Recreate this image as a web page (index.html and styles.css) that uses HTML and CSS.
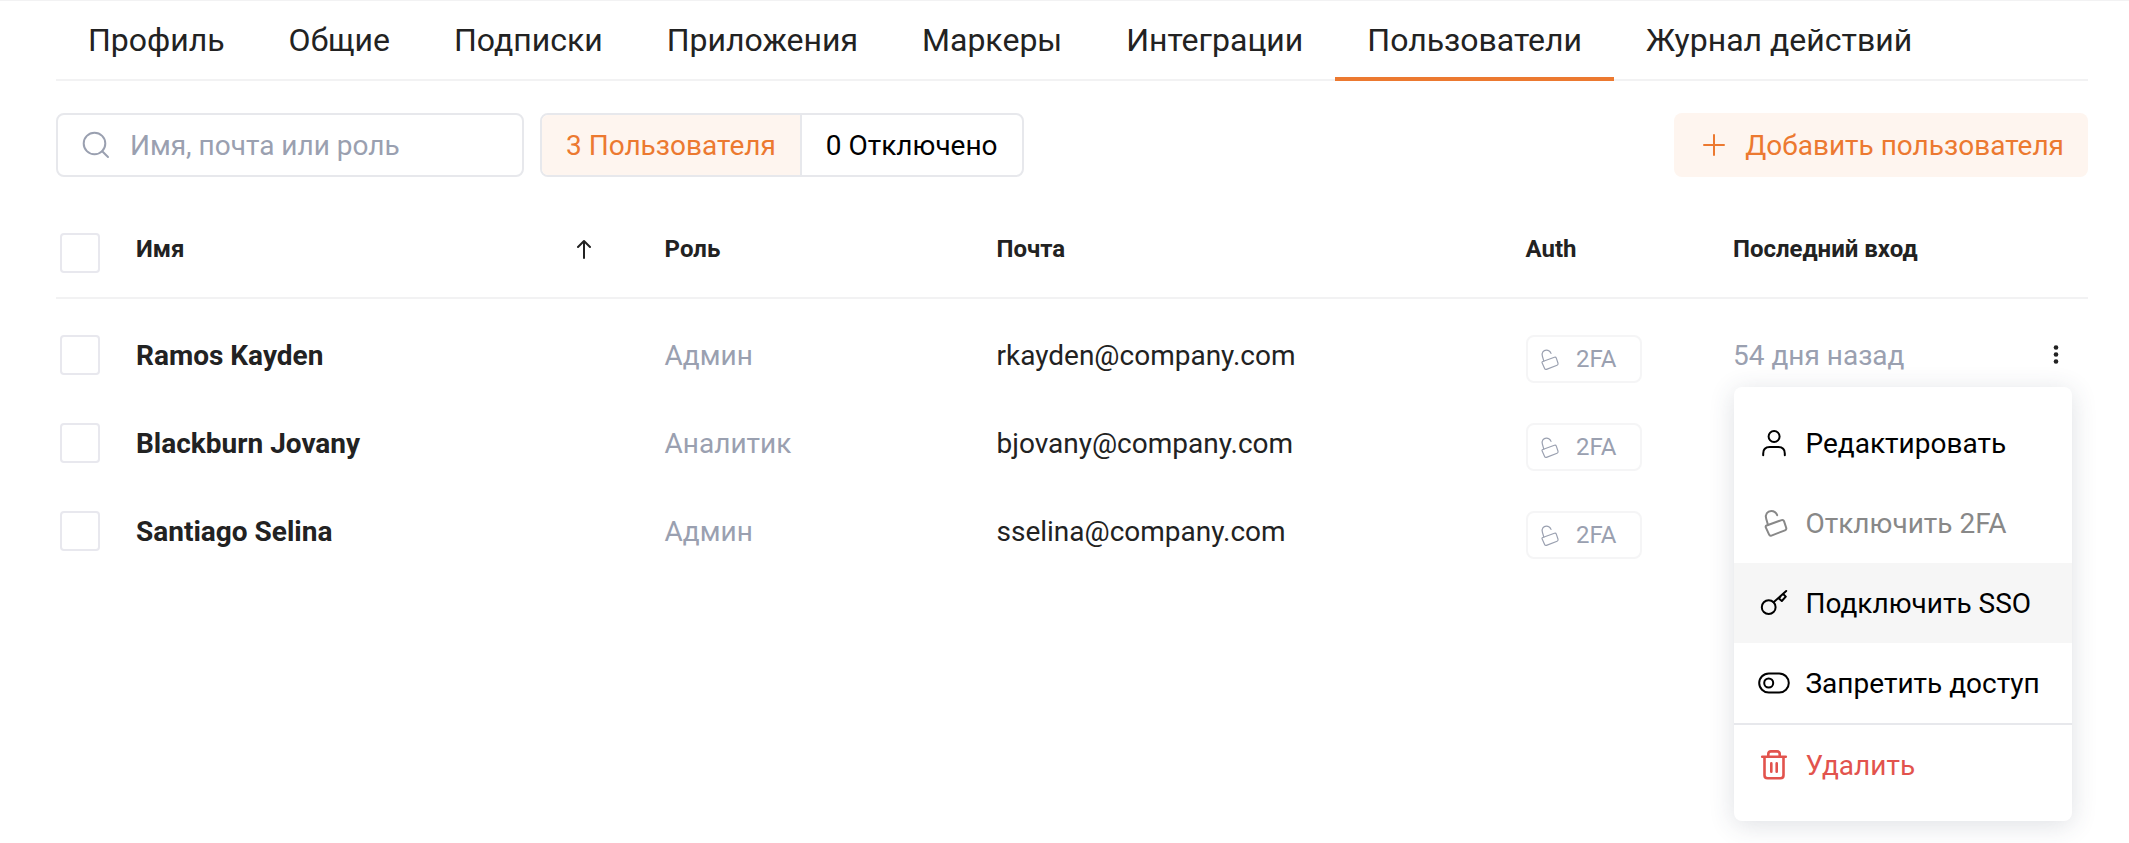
FILE: index.html
```html
<!DOCTYPE html>
<html lang="ru">
<head>
<meta charset="utf-8">
<title>Пользователи</title>
<link rel="stylesheet" href="styles.css">
</head>
<body>
<svg class="sprite" width="0" height="0">
  <symbol id="lock" viewBox="0 0 32 32">
    <path d="M10 18 L8.2 11.8 C6.8 7.5 9.5 4 13.2 4 C16.3 4 18.3 5.8 19.2 8.2"/>
    <path d="M8.6 18.5 L23.6 13.1 Q25.4 12.5 26 14.2 L28.2 20.8 Q28.7 22.6 27 23.3 L13.4 28.6 Q11.7 29.1 11 27.4 L7.9 20.6 Q7.2 19 8.6 18.5 Z"/>
  </symbol>
</svg>
<div class="page">
  <nav class="tabs">
    <a class="tab">Профиль</a>
    <a class="tab">Общие</a>
    <a class="tab">Подписки</a>
    <a class="tab">Приложения</a>
    <a class="tab">Маркеры</a>
    <a class="tab">Интеграции</a>
    <a class="tab tab-active">Пользователи</a>
    <a class="tab">Журнал действий</a>
  </nav>

  <div class="toolbar">
    <div class="search">
      <svg class="search-icon" width="28" height="28" viewBox="0 0 28 28"><circle cx="12.5" cy="12.5" r="10.8"/><path d="M20.2 20.2 L26 26"/></svg>
      <span class="label">Имя, почта или роль</span>
    </div>
    <div class="segments">
      <span class="segment segment-active">3 Пользователя</span>
      <span class="segment">0 Отключено</span>
    </div>
    <button class="add"><svg width="22" height="22" viewBox="0 0 22 22"><path d="M11 1 V21 M1 11 H21"/></svg><span class="label">Добавить пользователя</span></button>
  </div>

  <div class="row head">
    <span class="check"></span>
    <span class="cell-name">Имя<svg class="arrow" width="16" height="20" viewBox="0 0 16 20"><path d="M8 19 V2 M2 8 L8 2 L14 8"/></svg></span>
    <span>Роль</span>
    <span>Почта</span>
    <span>Auth</span>
    <span>Последний вход</span>
  </div>

  <div class="rows">
    <div class="row">
      <span class="check"></span>
      <span class="label name">Ramos Kayden</span>
      <span class="label muted">Админ</span>
      <span class="label">rkayden@company.com</span>
      <span class="badge"><svg width="25" height="25"><use href="#lock" width="25" height="25"/></svg>2FA</span>
      <span class="last">
        <span class="label muted">54 дня назад</span>
        <svg class="dots" width="8" height="24" viewBox="0 0 8 24"><circle cx="4" cy="4.5" r="2.3"/><circle cx="4" cy="11.5" r="2.3"/><circle cx="4" cy="18.5" r="2.3"/></svg>
        <span class="menu">
          <span class="item"><svg class="icon" viewBox="0 0 32 32"><circle cx="16.1" cy="9.5" r="5.5"/><path d="M5.2 28.2 V26.5 Q5.2 20 11.7 20 H20.3 Q26.8 20 26.8 26.5 V28.2"/></svg><span class="label">Редактировать</span></span>
          <span class="item item-off"><svg class="icon"><use href="#lock" width="32" height="32"/></svg><span class="label">Отключить 2FA</span></span>
          <span class="item item-hover"><svg class="icon" viewBox="0 0 32 32"><circle cx="10.7" cy="20.2" r="6.9"/><path d="M15.6 15.2 L28.2 4 M22.5 9.5 L20.9 11.6 L23.8 14 L27.8 9.6 L25.4 7.2"/></svg><span class="label">Подключить SSO</span></span>
          <span class="item"><svg class="icon" viewBox="0 0 32 32"><rect x="1.2" y="6.4" width="29.6" height="19.2" rx="9.6"/><circle cx="10.7" cy="16" r="4.5"/></svg><span class="label">Запретить доступ</span></span>
          <span class="item item-delete"><svg class="icon" viewBox="0 0 32 32"><path d="M4.2 7.7 H27.8 M10.3 7.2 V5 Q10.3 2.4 13 2.4 H19 Q21.7 2.4 21.7 5 V7.2 M6.5 8 V26.2 Q6.5 29.2 9.5 29.2 H22.5 Q25.5 29.2 25.5 26.2 V8 M13.3 14.4 V22.8 M18.7 14.4 V22.8"/></svg><span class="label">Удалить</span></span>
        </span>
      </span>
    </div>
    <div class="row">
      <span class="check"></span>
      <span class="label name">Blackburn Jovany</span>
      <span class="label muted">Аналитик</span>
      <span class="label">bjovany@company.com</span>
      <span class="badge"><svg width="25" height="25"><use href="#lock" width="25" height="25"/></svg>2FA</span>
    </div>
    <div class="row">
      <span class="check"></span>
      <span class="label name">Santiago Selina</span>
      <span class="label muted">Админ</span>
      <span class="label">sselina@company.com</span>
      <span class="badge"><svg width="25" height="25"><use href="#lock" width="25" height="25"/></svg>2FA</span>
    </div>
  </div>
</div>
</body>
</html>
```
FILE: styles.css
```css
* { box-sizing: border-box; }
body {
  margin: 0;
  height: 843px;
  overflow: hidden;
  background: #fff;
  color: #222;
  font: 28px/40px Roboto, sans-serif;
  border-top: 1px solid #f2f2f3;
}
svg { fill: none; stroke: currentColor; stroke-width: 2; stroke-linecap: round; stroke-linejoin: round; flex: none; }
.sprite { display: block; }
.page { padding: 0 41px 0 56px; }
.label { padding-top: 2px; }

.tabs { display: flex; height: 80px; border-bottom: 2px solid #f2f2f3; font-size: 32px; }
.tab { height: 80px; padding: 19px 32px 0; white-space: nowrap; }
.tab-active { border-bottom: 4px solid #ec7930; }

.toolbar { display: flex; height: 64px; margin-top: 32px; }
.search {
  display: flex; align-items: center; width: 468px; padding-left: 24px; gap: 20px;
  border: 2px solid #e7e8ec; border-radius: 8px; color: #9aa0b0;
}
.segments { display: flex; margin-left: 16px; border: 2px solid #e7e8ec; border-radius: 8px; overflow: hidden; }
.segment { padding: 11px 24px 9px; white-space: nowrap; color: #000; }
.segment-active { background: #fef5ef; color: #ec7930; border-right: 2px solid #e7e8ec; }
.add {
  display: flex; align-items: center; gap: 20px; margin-left: auto; padding: 0 24px 0 29px;
  border: 0; border-radius: 8px; background: #fef5ef; color: #ec7930; font: inherit; white-space: nowrap;
}

.row {
  display: grid; align-items: center; height: 88px; padding-left: 4px;
  grid-template-columns: 76px 528.6px 331.9px 529px 207.5px 1fr;
}
.check { width: 40px; height: 40px; border: 2px solid #e8e8ee; border-radius: 4px; }
.head {
  height: 122px; border-bottom: 2px solid #f2f2f3; padding-top: 24px;
  font-size: 24px; font-weight: 700;
}
.head .check { position: relative; top: 4px; }
.cell-name { display: flex; align-items: center; justify-content: space-between; padding-right: 72.6px; }
.rows { padding-top: 12px; }
.name { font-weight: 700; }
.muted { color: #9aa0b0; }
.badge {
  display: flex; align-items: center; gap: 15px; width: 116px; height: 48px; margin: 8px 0 0 .5px; padding-left: 8px;
  border: 2px solid #f5f5f6; border-radius: 8px; color: #9aa0b0; font-size: 24px;
}
.badge svg { stroke-width: 1.5; }
.last { position: relative; display: flex; justify-content: space-between; align-items: center; height: 40px; padding-right: 28px; }
.dots { fill: #222; stroke: none; }

.menu {
  position: absolute; left: 1px; top: 52px; z-index: 1; width: 338px; padding: 16px 0;
  border-radius: 8px; background: #fff; color: #000;
  box-shadow: 0 4px 26px rgba(50, 60, 85, .16);
}
.item { display: flex; align-items: center; height: 80px; padding-left: 24px; gap: 15.5px; white-space: nowrap; }
.icon { width: 32px; height: 32px; }
.item-off { color: #888; }
.item-hover { background: #f6f6f6; }
.item-delete { height: 82px; border-top: 2px solid #e7e8ec; color: #e2534d; }
.item-delete svg { stroke-width: 2.6; }
```
